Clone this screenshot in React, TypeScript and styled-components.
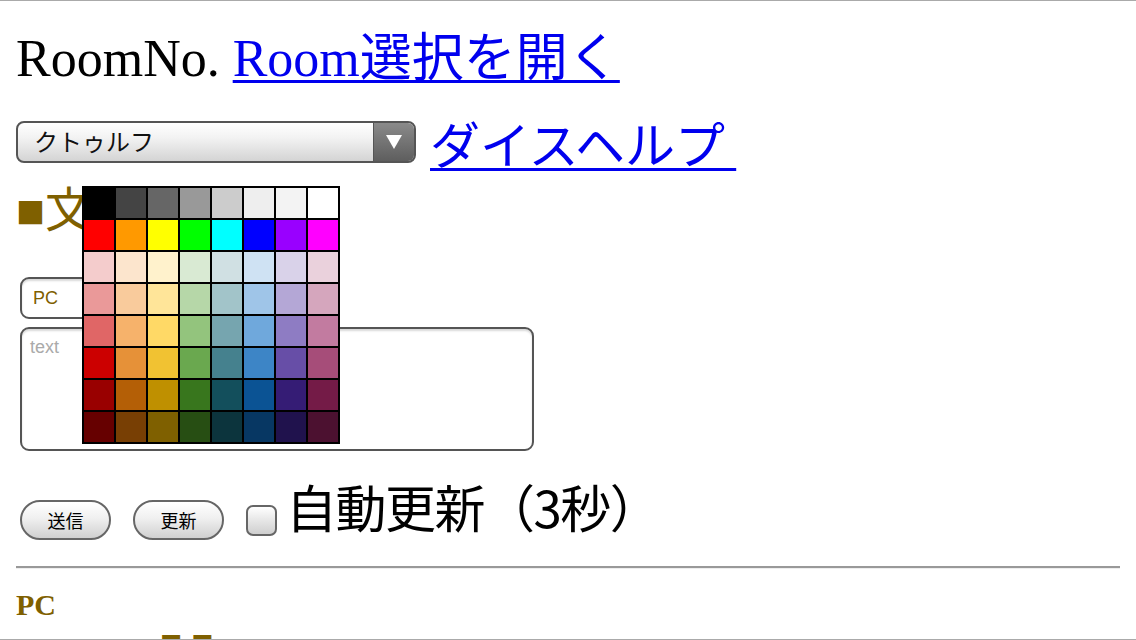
import React from "react";
import styled, { createGlobalStyle } from "styled-components";

const palette: string[][] = [
  ["#000000", "#444444", "#666666", "#999999", "#cccccc", "#eeeeee", "#f3f3f3", "#ffffff"],
  ["#ff0000", "#ff9900", "#ffff00", "#00ff00", "#00ffff", "#0000ff", "#9900ff", "#ff00ff"],
  ["#f4cccc", "#fce5cd", "#fff2cc", "#d9ead3", "#d0e0e3", "#cfe2f3", "#d9d2e9", "#ead1dc"],
  ["#ea9999", "#f9cb9c", "#ffe599", "#b6d7a8", "#a2c4c9", "#9fc5e8", "#b4a7d6", "#d5a6bd"],
  ["#e06666", "#f6b26b", "#ffd966", "#93c47d", "#76a5af", "#6fa8dc", "#8e7cc3", "#c27ba0"],
  ["#cc0000", "#e69138", "#f1c232", "#6aa84f", "#45818e", "#3d85c6", "#674ea7", "#a64d79"],
  ["#990000", "#b45f06", "#bf9000", "#38761d", "#134f5c", "#0b5394", "#351c75", "#741b47"],
  ["#660000", "#783f04", "#7f6000", "#274e13", "#0c343d", "#073763", "#20124d", "#4c1130"],
];

const BROWN = "#7f6000";

const Global = createGlobalStyle`
  html, body { margin: 0; padding: 0; background: #fff; }
  body { font-family: "Liberation Serif", "Noto Sans CJK JP", serif; color: #000; }
`;

const Page = styled.div`
  position: relative;
  height: 640px;
  box-sizing: border-box;
  overflow: hidden;
  border-top: 1px solid #aaa;
  border-bottom: 1px solid #aaa;
  padding: 0 16px;
`;

const Header = styled.div`
  font-size: 52px;
  line-height: 60px;
  margin-top: 28px;
  white-space: nowrap;
`;

const Link = styled.a<{ $gothic?: boolean }>`
  color: #0000ee;
  text-decoration: underline;
  text-decoration-thickness: 3px;
  text-underline-offset: 4px;
  font-family: ${(p) => (p.$gothic ? '"Noto Sans CJK JP", sans-serif' : "inherit")};
`;

const ToolRow = styled.div`
  display: flex;
  align-items: center;
  gap: 14px;
  margin-top: 25px;
  font-size: 50px;
  line-height: 56px;
`;

const SelectBox = styled.div`
  display: flex;
  width: 400px;
  height: 42px;
  box-sizing: border-box;
  border: 2px solid #555;
  border-radius: 8px;
  overflow: hidden;
  background: linear-gradient(#ffffff, #f2f2f2 40%, #d4d4d4);
`;

const SelectField = styled.select`
  flex: 1;
  appearance: none;
  border: none;
  background: transparent;
  padding: 0 16px;
  font-family: "Liberation Sans", "Noto Sans CJK JP", sans-serif;
  font-size: 24px;
  color: #111;
  outline: none;
`;

const Arrow = styled.div`
  width: 40px;
  display: flex;
  align-items: center;
  justify-content: center;
  border-left: 1px solid #555;
  background: linear-gradient(#8a8a8a, #5e5e5e);
`;

const Heading = styled.div`
  color: ${BROWN};
  font-size: 48px;
  line-height: 56px;
  margin-top: 13px;
`;

const Form = styled.div`
  display: flex;
  flex-direction: column;
  gap: 8px;
  margin: 38px 0 0 4px;
`;

const NameInput = styled.input`
  width: 300px;
  height: 42px;
  box-sizing: border-box;
  border: 2px solid #555;
  border-radius: 9px;
  padding: 0 11px;
  font-family: "Liberation Sans", "Noto Sans CJK JP", sans-serif;
  font-size: 18px;
  color: ${BROWN};
  box-shadow: inset 0 2px 2px rgba(0, 0, 0, 0.15);
  outline: none;
`;

const TextBox = styled.textarea`
  width: 514px;
  height: 124px;
  box-sizing: border-box;
  border: 2px solid #555;
  border-radius: 9px;
  padding: 8px 8px;
  font-family: "Liberation Sans", "Noto Sans CJK JP", sans-serif;
  font-size: 18px;
  resize: none;
  box-shadow: inset 0 2px 2px rgba(0, 0, 0, 0.15);
  outline: none;
  &::placeholder { color: #aaa; }
`;

const Actions = styled.div`
  display: flex;
  align-items: center;
  margin: 41px 0 0 4px;
  font-size: 48px;
  line-height: 56px;
`;

const Pill = styled.button`
  width: 91px;
  height: 40px;
  margin-right: 22px;
  border: 2px solid #666;
  border-radius: 20px;
  background: linear-gradient(#ffffff, #f0f0f0 45%, #d0d0d0);
  font-family: "Liberation Sans", "Noto Sans CJK JP", sans-serif;
  font-size: 18px;
  color: #000;
  padding: 0;
`;

const Check = styled.span`
  width: 31px;
  height: 31px;
  box-sizing: border-box;
  border: 2px solid #666;
  border-radius: 7px;
  background: linear-gradient(#ffffff, #e6e6e6 50%, #cfcfcf);
  margin-right: 9px;
`;

const AutoLabel = styled.span`
  font-family: "Noto Sans CJK JP", sans-serif;
  font-size: 51px;
  position: relative;
  top: -14px;
  letter-spacing: -1.5px;
`;

const Rule = styled.hr`
  margin: 18px 0 0;
  border: none;
  border-top: 2px solid #999;
  border-bottom: 1px solid #eee;
`;

const LogName = styled.div`
  color: ${BROWN};
  font-weight: bold;
  font-size: 30px;
  line-height: 36px;
  margin-top: 18px;
`;

const LogLine = styled.div`
  color: ${BROWN};
  font-size: 37px;
  line-height: 36px;
  letter-spacing: 9px;
  padding-left: 144px;
  margin-top: 2px;
`;

const Picker = styled.div`
  position: absolute;
  left: 82px;
  top: 185px;
  display: grid;
  grid-template-columns: repeat(8, 30px);
  grid-auto-rows: 30px;
  gap: 2px;
  padding: 2px;
  background: #000;
`;

const Swatch = styled.div<{ $c: string }>`
  background: ${(p) => p.$c};
`;

export default function App() {
  return (
    <>
      <Global />
      <Page>
        <Header>
          RoomNo. <Link href="#">Room選択を開く</Link>
        </Header>
        <ToolRow>
          <SelectBox>
            <SelectField defaultValue="cthulhu">
              <option value="cthulhu">クトゥルフ</option>
            </SelectField>
            <Arrow>
              <svg width="18" height="16" viewBox="0 0 18 16">
                <path d="M1 1 H17 L9 15 Z" fill="#fff" />
              </svg>
            </Arrow>
          </SelectBox>
          <Link href="#" $gothic>
            ダイスヘルプ&nbsp;
          </Link>
        </ToolRow>
        <Heading>■文字色</Heading>
        <Form>
          <NameInput defaultValue="PC" />
          <TextBox placeholder="text" />
        </Form>
        <Actions>
          <Pill>送信</Pill>
          <Pill>更新</Pill>
          <Check />
          <AutoLabel>自動更新（3秒）</AutoLabel>
        </Actions>
        <Rule />
        <LogName>PC</LogName>
        <LogLine>■■</LogLine>
        <Picker>
          {palette.flat().map((c, i) => (
            <Swatch key={i} $c={c} />
          ))}
        </Picker>
      </Page>
    </>
  );
}
